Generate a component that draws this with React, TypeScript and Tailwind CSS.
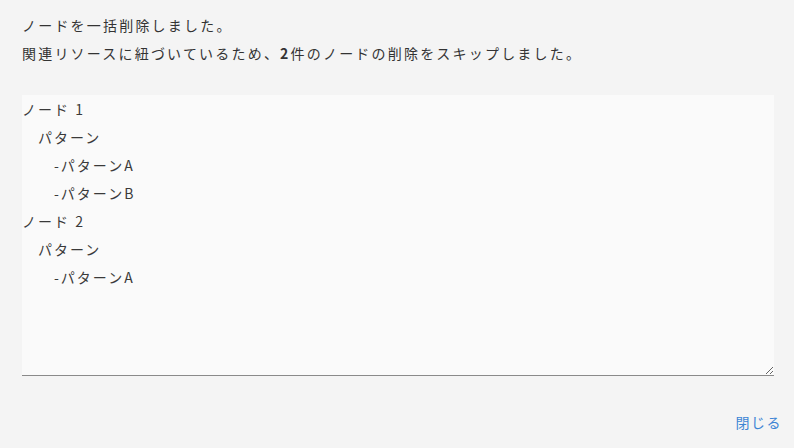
import React from 'react';

const skipped = [
  'ノード 1',
  '　パターン',
  '　　-パターンA',
  '　　-パターンB',
  'ノード 2',
  '　パターン',
  '　　-パターンA',
].join('\n');

export default function App() {
  return (
    <div
      className="w-[794px] h-[448px] bg-[#f4f4f4] text-[#333] text-[14px] leading-[28px] flex flex-col px-[22px] pt-[11px]"
      style={{ fontFamily: '"Noto Sans CJK JP", "Noto Sans", sans-serif' }}
    >
      <p className="tracking-[2.2px]">ノードを一括削除しました。</p>
      <p className="tracking-[2.2px]">
        関連リソースに紐づいているため、<span className="font-bold">2</span>件のノードの削除をスキップしました。
      </p>
      <textarea
        readOnly
        defaultValue={skipped}
        className="mt-[28px] w-[752px] h-[281px] bg-[#fafafa] text-[#3a3a3a] text-[14px] leading-[28px] tracking-[2px] border-b border-[#8a8a8a] outline-none p-0"
        style={{ fontFamily: '"Noto Sans CJK JP", "Noto Sans", sans-serif' }}
      />
      <div className="flex justify-end mt-[32px] -mr-[10px]">
        <button className="text-[#3d85d4] text-[14px] leading-[28px] tracking-[1.5px] px-0">閉じる</button>
      </div>
    </div>
  );
}
